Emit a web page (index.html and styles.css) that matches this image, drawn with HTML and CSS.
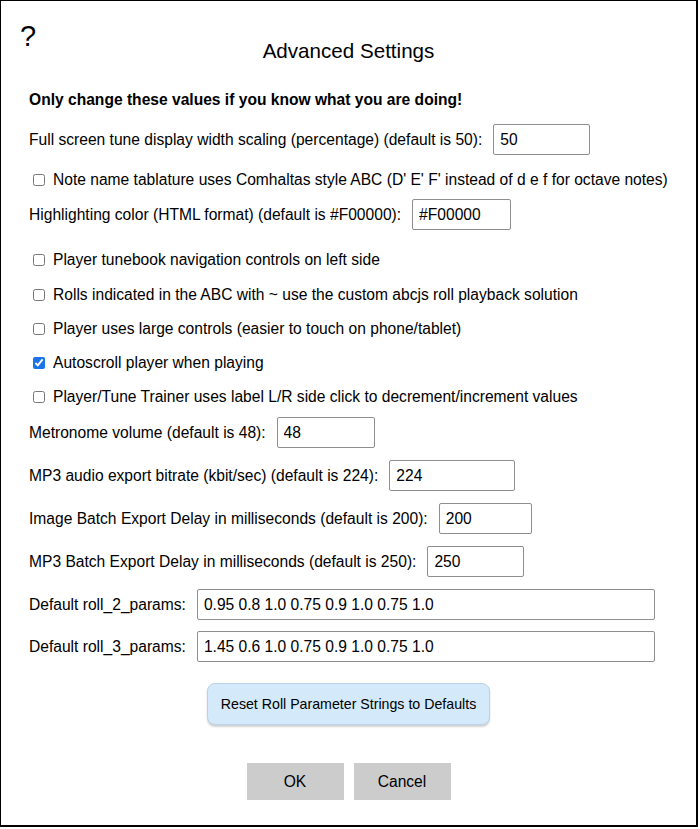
FILE: index.html
```html
<!DOCTYPE html>
<html>
<head>
<meta charset="utf-8">
<link rel="stylesheet" href="styles.css">
</head>
<body>
<div class="dialog">
  <div class="help">?</div>
  <h1 class="title">Advanced Settings</h1>
  <p class="warn">Only change these values if you know what you are doing!</p>

  <div class="row irow r1">
    <label>Full screen tune display width scaling (percentage) (default is 50):</label>
    <input class="w96" type="text" value="50">
  </div>
  <div class="row crow r2">
    <input type="checkbox"> <span>Note name tablature uses Comhaltas style ABC (D' E' F' instead of d e f for octave notes)</span>
  </div>
  <div class="row irow r3">
    <label>Highlighting color (HTML format) (default is #F00000):</label>
    <input class="w98" type="text" value="#F00000">
  </div>
  <div class="row crow r4">
    <input type="checkbox"> <span>Player tunebook navigation controls on left side</span>
  </div>
  <div class="row crow r5">
    <input type="checkbox"> <span>Rolls indicated in the ABC with ~ use the custom abcjs roll playback solution</span>
  </div>
  <div class="row crow r6">
    <input type="checkbox"> <span>Player uses large controls (easier to touch on phone/tablet)</span>
  </div>
  <div class="row crow r6">
    <input type="checkbox" checked> <span>Autoscroll player when playing</span>
  </div>
  <div class="row crow r6">
    <input type="checkbox"> <span>Player/Tune Trainer uses label L/R side click to decrement/increment values</span>
  </div>
  <div class="row irow r7">
    <label>Metronome volume (default is 48):</label>
    <input class="w97" type="text" value="48">
  </div>
  <div class="row irow r8">
    <label>MP3 audio export bitrate (kbit/sec) (default is 224):</label>
    <input class="w125" type="text" value="224">
  </div>
  <div class="row irow r8">
    <label>Image Batch Export Delay in milliseconds (default is 200):</label>
    <input class="w92" type="text" value="200">
  </div>
  <div class="row irow r8">
    <label>MP3 Batch Export Delay in milliseconds (default is 250):</label>
    <input class="w96" type="text" value="250">
  </div>
  <div class="row irow r8">
    <label>Default roll_2_params:</label>
    <input class="wide" type="text" value="0.95 0.8 1.0 0.75 0.9 1.0 0.75 1.0">
  </div>
  <div class="row irow r9">
    <label>Default roll_3_params:</label>
    <input class="wide" type="text" value="1.45 0.6 1.0 0.75 0.9 1.0 0.75 1.0">
  </div>

  <div class="center reset-wrap">
    <button class="reset">Reset Roll Parameter Strings to Defaults</button>
  </div>
  <div class="center buttons">
    <button class="btn">OK</button>
    <button class="btn">Cancel</button>
  </div>
</div>
</body>
</html>
```

FILE: styles.css
```css
html, body {
  margin: 0;
  padding: 0;
  background: #fff;
}
body {
  font-family: "Liberation Sans", Arial, sans-serif;
  color: #000;
}
.dialog {
  box-sizing: border-box;
  width: 699px;
  height: 828px;
  margin: -1px 0 0 -1px;
  border: 2px solid #000;
  padding: 0 0 0 28px;
  position: relative;
}
.help {
  position: absolute;
  left: 19px;
  top: 18px;
  font-size: 29px;
  line-height: 34px;
}
.title {
  margin: 0;
  padding-top: 38px;
  padding-right: 28px;
  text-align: center;
  font-weight: normal;
  font-size: 20.6px;
  line-height: 24px;
}
.warn {
  margin: 28px 0 0 0;
  font-weight: bold;
  font-size: 15.6px;
  line-height: 18px;
}
.row {
  display: flex;
  align-items: center;
  font-size: 15.6px;
}
.irow { height: 31px; }
.crow { height: 20px; }
.row label { margin-right: 11px; }
.row input[type="text"] {
  box-sizing: border-box;
  height: 31px;
  border: 1px solid #8f8f8f;
  border-radius: 2px;
  padding: 0 6px;
  font-family: "Liberation Sans", Arial, sans-serif;
  font-size: 15.6px;
  color: #000;
}
.row input[type="checkbox"] {
  width: 12px;
  height: 12px;
  margin: 0 8px 0 4px;
  accent-color: #1a73e8;
}
.r1 { margin-top: 15px; }
.r2 { margin-top: 15px; }
.r3 { margin-top: 9px; }
.r4 { margin-top: 20px; }
.r5 { margin-top: 15px; }
.r6 { margin-top: 14px; }
.r7 { margin-top: 10px; }
.r8 { margin-top: 12px; }
.r9 { margin-top: 11px; }
.w96 { width: 97px; }
.w98 { width: 99px; }
.w97 { width: 98px; }
.w125 { width: 126px; }
.w92 { width: 93px; }
.wide { width: 458px; }
.center {
  display: flex;
  justify-content: center;
  padding-right: 28px;
}
.reset-wrap { margin-top: 21px; }
.reset {
  width: 283px;
  height: 42px;
  border: 1px solid #b9d3ea;
  border-radius: 8px;
  background: #d4e9f9;
  box-shadow: 0 2px 2px rgba(0,0,0,0.18);
  font-family: "Liberation Sans", Arial, sans-serif;
  font-size: 14.2px;
  color: #000;
}
.buttons {
  margin-top: 38px;
  gap: 10px;
}
.btn {
  width: 97px;
  height: 37px;
  border: none;
  background: #cccccc;
  font-family: "Liberation Sans", Arial, sans-serif;
  font-size: 15.6px;
  color: #000;
}
```
